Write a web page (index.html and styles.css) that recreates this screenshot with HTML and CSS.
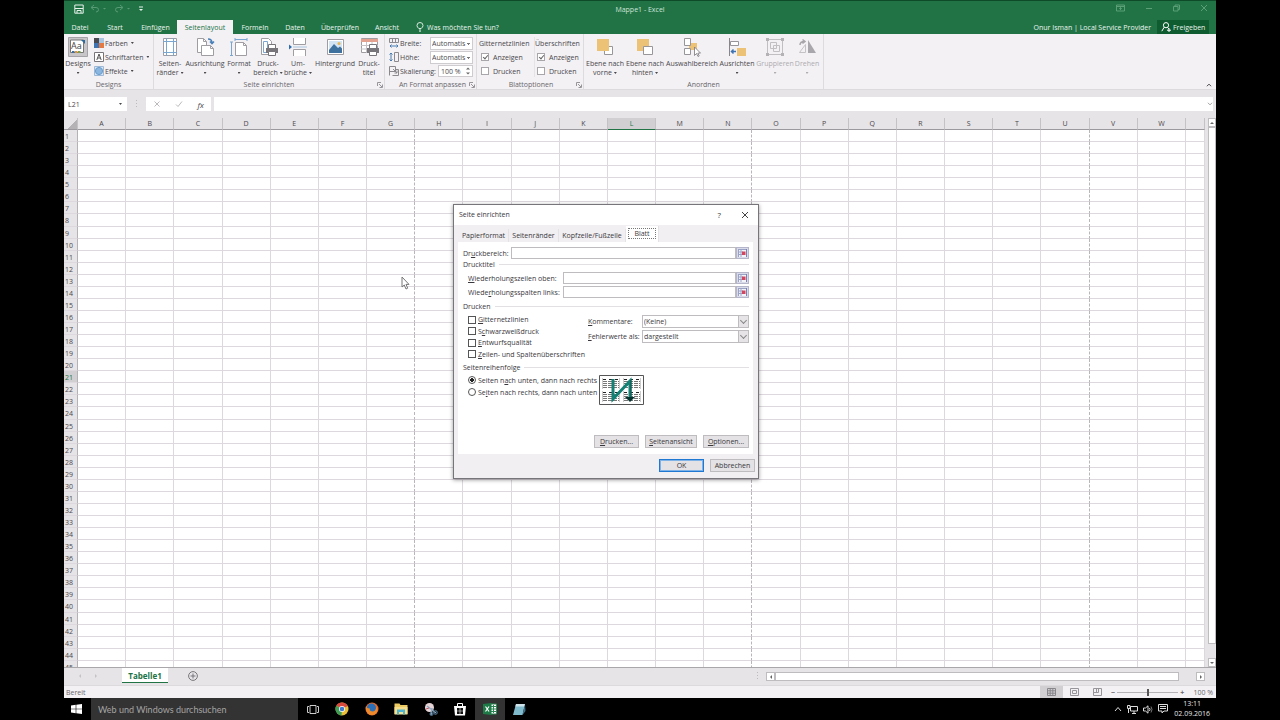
FILE: index.html
```html
<!DOCTYPE html>
<html lang="de">
<head>
<meta charset="utf-8">
<title>Mappe1 - Excel</title>
<link rel="stylesheet" href="styles.css">
</head>
<body>
<div class="desktop">
<div class="window">

  <header class="topbar">
    <div class="titlebar">
      <div class="quick">
        <button class="qbtn" aria-label="Speichern"><svg width="10" height="10" viewBox="0 0 10 10" fill="none" stroke="#e6f2ea"><path d="M.8 1h8.4v8.2H.8z"/><path d="M1 4.5h8M3 9V6.5h4V9"/></svg></button>
        <button class="qbtn dim" aria-label="Rückgängig"><svg width="18" height="9" viewBox="0 0 18 9" fill="none" stroke="#8fc4a4"><path d="M4 1 1 3.500l3 2.500M1.500 3.500H6q2.500 0 2.500 2.200Q8.500 8 6 8"/><path d="M13 4h3l-1.500 1.500z" fill="#8fc4a4" stroke="none"/></svg></button>
        <button class="qbtn dim" aria-label="Wiederholen"><svg width="18" height="9" viewBox="0 0 18 9" fill="none" stroke="#8fc4a4"><path d="m6 1 3 2.500L6 6M8.500 3.500H4Q1.500 3.500 1.500 5.700 1.500 8 4 8"/><path d="M13 4h3l-1.500 1.500z" fill="#8fc4a4" stroke="none"/></svg></button>
        <button class="qbtn" aria-label="Symbolleiste anpassen"><svg width="6" height="6" viewBox="0 0 6 6" fill="#e6f2ea"><path d="M1 .5h4v1H1zM1 3h4L3 5z"/></svg></button>
      </div>
      <div class="doc-title">Mappe1 - Excel</div>
      <div class="winbtns">
        <button aria-label="Menüband-Anzeige"><svg width="9" height="8" viewBox="0 0 9 8" fill="none" stroke="#5b9f77"><path d="M.5 1h8v6h-8zM.5 2.500h8M4.500 6V3.500M3.200 4.800l1.300-1.300 1.300 1.300"/></svg></button>
        <button aria-label="Minimieren"><svg width="9" height="8" viewBox="0 0 9 8" stroke="#5b9f77"><path d="M2 4.500h6"/></svg></button>
        <button aria-label="Verkleinern"><svg width="9" height="8" viewBox="0 0 9 8" fill="none" stroke="#5b9f77"><path d="M1.500 2.500h4.500v4.500H1.500zM3 2.500V1h4.500v4.500H6"/></svg></button>
        <button aria-label="Schließen"><svg width="9" height="8" viewBox="0 0 9 8" stroke="#5b9f77"><path d="m1 1 6 6M7 1 1 7"/></svg></button>
      </div>
    </div>
    <nav class="tabs">
      <button class="tab t-datei">Datei</button>
      <button class="tab t-start">Start</button>
      <button class="tab t-einf">Einfügen</button>
      <button class="tab t-seite active">Seitenlayout</button>
      <button class="tab t-form">Formeln</button>
      <button class="tab t-daten">Daten</button>
      <button class="tab t-pruef">Überprüfen</button>
      <button class="tab t-ansicht">Ansicht</button>
      <button class="tell"><svg width="8" height="10" viewBox="0 0 8 10" fill="none" stroke="#d8eadf"><path d="M2.800 6.500Q1 5 1 3.500a3 3 0 0 1 6 0Q7 5 5.200 6.500zM3 8h2M3.200 9.300h1.600"/></svg>Was möchten Sie tun?</button>
      <span class="user">Onur Isman | Local Service Provider</span>
      <button class="share"><svg width="10" height="10" viewBox="0 0 10 10" fill="none" stroke="#fff"><circle cx="5" cy="3.200" r="2.600"/><path d="M3.200 5.200.8 9.200M6.500 5.300 8 7M6 8.200h4M8 6.200v4"/></svg>Freigeben</button>
    </nav>
  </header>

  <section class="ribbon">
    <div class="group g-designs">
      <div class="tools">
        <button class="big w-designs"><svg width="20" height="20" viewBox="0 0 20 20"><path d="M.5.5h19v19H.5z" fill="#c9c6ca" stroke="#a5a2a8"/><path d="M2.500 3h13v12.500h-13z" fill="#fff" stroke="#777"/><path d="M13 3h4v4z" fill="#2e6a9e"/><text x="3" y="12" class="aa">Aa</text><path d="M4 14h2.500v2H4z" fill="#3b6ea5"/><path d="M7 14h2.500v2H7z" fill="#d9953b"/><path d="M10 14h2.500v2H10z" fill="#7d9b52"/></svg><span>Designs</span><i class="car"></i></button>
        <div class="stack">
          <button class="small"><svg width="10" height="10" viewBox="0 0 10 10"><path d="M0 0h5v5H0z" fill="#4a4a50"/><path d="M5 0h5v5H5z" fill="#a9c4de"/><path d="M0 5h5v5H0z" fill="#3f74b3"/><path d="M5 5h5v5H5z" fill="#e27a45"/></svg>Farben<i class="car"></i></button>
          <button class="small"><svg width="10" height="10" viewBox="0 0 10 10" fill="none"><path d="M.5.5h9v9h-9z" fill="#fff" stroke="#77757a"/><path d="m2.800 8 2.200-6 2.200 6M3.600 6h2.800" stroke="#555"/></svg>Schriftarten<i class="car"></i></button>
          <button class="small"><svg width="10" height="10" viewBox="0 0 10 10"><path d="M.5.5h9v9h-9z" fill="#dce8f5" stroke="#9db9d6"/><circle cx="5" cy="5" r="3.600" fill="#8ab6e0" stroke="#6b9bcb"/></svg>Effekte<i class="car"></i></button>
        </div>
      </div>
      <div class="glabel">Designs</div>
    </div>

    <div class="group g-seite">
      <div class="tools">
        <button class="big w-30"><svg width="20" height="20" viewBox="0 0 20 20" fill="none"><path d="M3.500 1.500h13v17h-13z" fill="#fff" stroke="#a09da2"/><path d="M6.500 1v18M13.500 1v18M3 4.500h14M3 15.500h14" stroke="#7ba6cf"/></svg><span>Seiten-<br>ränder<i class="car"></i></span></button>
        <button class="big w-40"><svg width="20" height="20" viewBox="0 0 20 20" fill="none"><path d="M2.500 1.500h6l3 3v11h-9z" fill="#fff" stroke="#a09da2"/><path d="M6.500 8.500h9l3 3v7h-12z" fill="#fff" stroke="#a09da2"/><path d="M8.500 1.500v3h3M15.500 8.500v3h3" stroke="#a09da2"/><path d="M13 2q4 0 4 4M15 4.500l2 2.200 2-2.200" stroke="#4a80b8" stroke-width="1.500"/></svg><span>Ausrichtung</span><i class="car"></i></button>
        <button class="big w-28"><svg width="20" height="20" viewBox="0 0 20 20" fill="none"><path d="M6.500 5.500h8l3 3v10h-11z" fill="#fff" stroke="#a09da2"/><path d="M14.500 5.500v3h3" stroke="#a09da2"/><path d="M6 2.500h12M6 1v3M18 1v3M2.500 5v14M1 5h3M1 18.500h3" stroke="#7ba6cf"/></svg><span>Format</span><i class="car"></i></button>
        <button class="big w-30"><svg width="20" height="20" viewBox="0 0 20 20" fill="none"><path d="M3.500 1.500h7l3 3v13h-10z" fill="#fff" stroke="#a09da2"/><path d="M5.500 4.500h4v11h-4z" stroke="#7ba6cf"/><path d="M10.500 7.500h7v4h-7z" fill="#fff" stroke="#77757a"/><path d="M8 11h12v5H8z" fill="#77757a"/><path d="M10.500 14.500h7v4h-7z" fill="#fff" stroke="#77757a"/></svg><span>Druck-<br>bereich<i class="car"></i></span></button>
        <button class="big w-30"><svg width="20" height="20" viewBox="0 0 20 20" fill="none"><path d="M5.500 1v6.500h12V1M5.500 19v-6.500h12V19" fill="#fff" stroke="#a09da2"/><path d="M5 10h14" stroke="#a9c4de"/><path d="m1 7.500 3 2.500-3 2.500z" fill="#2e6dad"/></svg><span>Um-<br>brüche<i class="car"></i></span></button>
        <button class="big w-44"><svg width="20" height="20" viewBox="0 0 20 20"><path d="M2.500 2.500h16v15h-16z" fill="#fff" stroke="#a09da2"/><path d="M4 4h13v12H4z" fill="#d3e5f5"/><path d="m4 13 5-6 4 4 2-1.500 2 2V16H4z" fill="#3f719f"/><circle cx="14" cy="6.500" r="1.500" fill="#e8b65a"/></svg><span>Hintergrund</span></button>
        <button class="big w-24"><svg width="20" height="20" viewBox="0 0 20 20" fill="none"><path d="M2.500 1.500h16v14h-16z" fill="#fff" stroke="#a09da2"/><path d="M2 2h17v3H2z" fill="#e3a18f"/><path d="M2 8.500h17M2 12h17M7.500 5v11M13 5v11" stroke="#c5c2c6"/><path d="M10.500 7.500h7v4h-7z" fill="#fff" stroke="#77757a"/><path d="M8 11h12v5H8z" fill="#77757a"/><path d="M10.500 14.500h7v4h-7z" fill="#fff" stroke="#77757a"/></svg><span>Druck-<br>titel</span></button>
      </div>
      <div class="glabel">Seite einrichten</div>
      <button class="launch" aria-label="Seite einrichten öffnen"><svg width="6" height="6" viewBox="0 0 6 6" fill="none" stroke="#98959a"><path d="M.5 4V.5H4M2 2l3 3M5.500 2.500v3h-3"/></svg></button>
    </div>

    <div class="group g-format">
      <div class="formrows">
        <div class="frow"><svg width="10" height="10" viewBox="0 0 10 10" fill="none"><path d="M.5.500h9v4h-9zM3.500.500v4M6.500.500v4" stroke="#8b898d"/><path d="M1 8h8M2.500 6.500 1 8l1.500 1.500M7.500 6.500 9 8 7.500 9.500" stroke="#4a7bb0"/></svg><label for="breite">Breite:</label><select id="breite" class="combo"><option>Automatis</option></select></div>
        <div class="frow"><svg width="10" height="10" viewBox="0 0 10 10" fill="none"><path d="M5.500.5h4v9h-4z" stroke="#8b898d"/><path d="M2 1v8M.5 2.500 2 1l1.500 1.500M.5 7.500 2 9l1.500-1.500" stroke="#4a7bb0"/></svg><label for="hoehe">Höhe:</label><select id="hoehe" class="combo"><option>Automatis</option></select></div>
        <div class="frow"><svg width="10" height="10" viewBox="0 0 10 10" fill="none"><path d="M.5 9.500v-9h6v5h-6M3.500 9.500h6v-6h-3M4 3l4 4M8 4.500V7H5.500" stroke="#8b898d"/></svg><label for="skal">Skalierung:</label><span class="spin"><input id="skal" value="100 %"><svg width="4" height="8" viewBox="0 0 4 8" fill="#666"><path d="M0 2.500 2 .5l2 2zM0 5.500h4l-2 2z"/></svg></span></div>
      </div>
      <div class="glabel">An Format anpassen</div>
      <button class="launch" aria-label="Skalierung öffnen"><svg width="6" height="6" viewBox="0 0 6 6" fill="none" stroke="#98959a"><path d="M.5 4V.5H4M2 2l3 3M5.500 2.500v3h-3"/></svg></button>
    </div>

    <div class="group g-blatt">
      <div class="optcols">
        <div class="optcol"><span class="ohead">Gitternetzlinien</span><label><input type="checkbox" checked>Anzeigen</label><label><input type="checkbox">Drucken</label></div>
        <div class="optcol second"><span class="ohead">Überschriften</span><label><input type="checkbox" checked>Anzeigen</label><label><input type="checkbox">Drucken</label></div>
      </div>
      <div class="glabel">Blattoptionen</div>
      <button class="launch" aria-label="Blattoptionen öffnen"><svg width="6" height="6" viewBox="0 0 6 6" fill="none" stroke="#98959a"><path d="M.5 4V.5H4M2 2l3 3M5.500 2.500v3h-3"/></svg></button>
    </div>

    <div class="group g-anordnen">
      <div class="tools">
        <button class="big w-42"><svg width="20" height="20" viewBox="0 0 20 20"><path d="M9.500 9.500h8v8h-8z" fill="#fff" stroke="#99969a"/><path d="M2 2h12v12H2z" fill="#ecc277"/></svg><span>Ebene nach<br>vorne<i class="car"></i></span></button>
        <button class="big w-38"><svg width="20" height="20" viewBox="0 0 20 20"><path d="M2 2h12v12H2z" fill="#ecc277"/><path d="M8.500 9.500h9v8h-9z" fill="#fff" stroke="#99969a"/></svg><span>Ebene nach<br>hinten<i class="car"></i></span></button>
        <button class="big w-56"><svg width="20" height="20" viewBox="0 0 20 20"><path d="M7 6h8v7H7z" fill="#ecc277"/><path d="M2.500 1.500h6v7h-6zM2.500 11.500h6v6h-6z" fill="#fff" stroke="#98959a"/><path d="M12.500 10v8.500l2-2 1.500 3 1.200-.6-1.400-2.800h2.700z" fill="#fff" stroke="#77757a" stroke-width=".8"/></svg><span>Auswahlbereich</span></button>
        <button class="big w-34"><svg width="20" height="20" viewBox="0 0 20 20" fill="none"><path d="M2.500 1v18" stroke="#88868a"/><path d="M3.500 4.500h8v4h-8z" fill="#fff" stroke="#98959a"/><path d="M10 11h9v8h-9z" fill="#ecc277"/><path d="M9 14.500H4.500M6.500 12.500l-2 2 2 2" stroke="#3f74b3" stroke-width="1.500"/></svg><span>Ausrichten</span><i class="car"></i></button>
        <button class="big off w-42"><svg width="20" height="20" viewBox="0 0 20 20" fill="none" stroke="#c2bfc3"><path d="M2.500 2.500h15v15h-15zM5.500 5.500h6v6h-6zM8.500 8.500h6v6h-6z"/><path d="M1 1h3v3H1zM16 1h3v3h-3zM1 16h3v3H1zM16 16h3v3h-3z" fill="#b5b2b6" stroke="none"/></svg><span>Gruppieren</span><i class="car"></i></button>
        <button class="big off w-22"><svg width="20" height="20" viewBox="0 0 20 20" fill="none"><path d="M2.500 15.500h6v-8z" stroke="#c5c2c6"/><path d="M11 3v13h8z" fill="#aaa7ac"/><path d="M3 8q0-3.500 4.500-3.500M5.500 2.500l2.500 2-2.500 2" stroke="#a9a6ab" stroke-width="1.500"/></svg><span>Drehen</span><i class="car"></i></button>
      </div>
      <div class="glabel">Anordnen</div>
    </div>
    <button class="collapse" aria-label="Menüband reduzieren"><svg width="6" height="4" viewBox="0 0 6 4" fill="none" stroke="#555"><path d="m.8 3.200 2.200-2 2.200 2"/></svg></button>
  </section>

  <section class="formula">
    <div class="namebox"><input value="L21" aria-label="Namenfeld"><i class="car"></i></div>
    <span class="grip"></span>
    <div class="fbtns">
      <button aria-label="Abbrechen"><svg width="8" height="8" viewBox="0 0 8 8" stroke="#bdbabd"><path d="m1.500 1.500 5 5M6.500 1.500l-5 5"/></svg></button>
      <button aria-label="Eingeben"><svg width="8" height="8" viewBox="0 0 8 8" fill="none" stroke="#bdbabd"><path d="m1 4.500 2 2L7 1.500"/></svg></button>
      <button class="fx" aria-label="Funktion einfügen">fx</button>
    </div>
    <div class="fx-input"><input aria-label="Bearbeitungsleiste"><svg width="6" height="4" viewBox="0 0 6 4" fill="none" stroke="#aaa"><path d="m.8.8 2.200 2 2.200-2"/></svg></div>
  </section>

  <main class="sheet">
    <div class="cells"><table id="grid"></table></div>
    <div class="vscroll"><button aria-label="Nach oben"><i class="up"></i></button><div class="vthumb"></div><button aria-label="Nach unten"><i class="down"></i></button></div>
  </main>

  <footer class="sheetbar">
    <div class="nav"><button aria-label="Vorheriges Blatt"><i class="left pale"></i></button><button aria-label="Nächstes Blatt"><i class="right pale"></i></button></div>
    <button class="sheettab">Tabelle1</button>
    <button class="addsheet" aria-label="Neues Blatt"><svg width="10" height="10" viewBox="0 0 10 10" fill="none" stroke="#77757a"><circle cx="5" cy="5" r="4.400"/><path d="M5 2.500v5M2.500 5h5"/></svg></button>
    <span class="grip push"></span>
    <div class="hscroll"><button aria-label="Nach links"><i class="left"></i></button><div class="htrack"><div class="hthumb"></div></div><button aria-label="Nach rechts"><i class="right"></i></button></div>
  </footer>

  <footer class="status">
    <span>Bereit</span>
    <div class="views">
      <button class="on" aria-label="Normal"><svg width="9" height="8" viewBox="0 0 9 8" fill="none" stroke="#88868a"><path d="M.5.5h8v7h-8zM.5 2.800h8M.5 5.200h8M3.200.5v7M5.800.5v7"/></svg></button>
      <button aria-label="Seitenlayout"><svg width="9" height="8" viewBox="0 0 9 8" fill="none" stroke="#98959a"><path d="M.5.500h8v7h-8zM2.500 2.500h4v3h-4z"/></svg></button>
      <button aria-label="Umbruchvorschau"><svg width="9" height="8" viewBox="0 0 9 8" fill="none" stroke="#98959a"><path d="M.5.500h8v7h-8zM3.500.5v4M5.500.5v4H.5"/></svg></button>
    </div>
    <div class="zoom"><button aria-label="Verkleinern">−</button><input type="range" min="0" max="100" value="50" aria-label="Zoom"><button aria-label="Vergrößern">+</button><span>100 %</span></div>
  </footer>

  <form class="dialog" onsubmit="return false">
    <div class="dtitle"><span>Seite einrichten</span><button type="button" class="help" aria-label="Hilfe">?</button><button type="button" aria-label="Schließen"><svg width="8" height="8" viewBox="0 0 8 8" stroke="#444"><path d="m1 1 6 6M7 1 1 7"/></svg></button></div>
    <div class="dtabs">
      <button type="button" class="dt-a">Papierformat</button>
      <button type="button" class="dt-b">Seitenränder</button>
      <button type="button" class="dt-c">Kopfzeile/Fußzeile</button>
      <button type="button" class="cur"><span>Blatt</span></button>
    </div>
    <div class="panel">
      <div class="line"><label class="l1" for="db">Dr<u>u</u>ckbereich:</label><input id="db"><button type="button" class="ref" aria-label="Bereich wählen"><svg width="9" height="8" viewBox="0 0 9 8"><path d="M0 0h9v8H0z" fill="#f3f3fa"/><path d="M0 .5h9M.5 0v8M0 3h5M0 5.500h4M3 0v8" stroke="#9aa2c6" fill="none"/><path d="M4 2.500h3.500V6H4z" fill="#d34660"/><path d="M8.500 0v8" stroke="#7c80ac"/></svg></button></div>
      <h2>Drucktitel</h2>
      <div class="line in first"><label class="l2" for="wz"><u>W</u>iederholungszeilen oben:</label><input id="wz"><button type="button" class="ref" aria-label="Zeilen wählen"><svg width="9" height="8" viewBox="0 0 9 8"><path d="M0 0h9v8H0z" fill="#f3f3fa"/><path d="M0 .5h9M.5 0v8M0 3h5M0 5.500h4M3 0v8" stroke="#9aa2c6" fill="none"/><path d="M4 2.500h3.500V6H4z" fill="#d34660"/><path d="M8.500 0v8" stroke="#7c80ac"/></svg></button></div>
      <div class="line in"><label class="l2" for="ws">Wiede<u>r</u>holungsspalten links:</label><input id="ws"><button type="button" class="ref" aria-label="Spalten wählen"><svg width="9" height="8" viewBox="0 0 9 8"><path d="M0 0h9v8H0z" fill="#f3f3fa"/><path d="M0 .5h9M.5 0v8M0 3h5M0 5.500h4M3 0v8" stroke="#9aa2c6" fill="none"/><path d="M4 2.500h3.500V6H4z" fill="#d34660"/><path d="M8.500 0v8" stroke="#7c80ac"/></svg></button></div>
      <h2 class="h-dr">Drucken</h2>
      <div class="print">
        <div class="checks">
          <label><input type="checkbox"><span><u>G</u>itternetzlinien</span></label>
          <label><input type="checkbox"><span>S<u>c</u>hwarzweißdruck</span></label>
          <label><input type="checkbox"><span><u>E</u>ntwurfsqualität</span></label>
          <label><input type="checkbox"><span><u>Z</u>eilen- und Spaltenüberschriften</span></label>
        </div>
        <div class="picks">
          <div class="pick"><label for="ko"><u>K</u>ommentare:</label><span class="drop"><select id="ko"><option>(Keine)</option></select><i class="chev"></i></span></div>
          <div class="pick"><label for="fe"><u>F</u>ehlerwerte als:</label><span class="drop"><select id="fe"><option>dargestellt</option></select><i class="chev"></i></span></div>
        </div>
      </div>
      <h2 class="h-sr">Seitenreihenfolge</h2>
      <div class="order">
        <div class="radios">
          <label><input type="radio" name="o" checked><span>Seiten n<u>a</u>ch unten, dann nach rechts</span></label>
          <label><input type="radio" name="o"><span>Se<u>i</u>ten nach rechts, dann nach unten</span></label>
        </div>
        <svg class="preview" width="45" height="30" viewBox="0 0 45 30" fill="none"><path d="M.5.5h44v29H.5z" fill="#fff" stroke="#555"/><g stroke="#777" stroke-dasharray="4 1"><path d="M4 6.500h16M4 8.500h16M4 10.500h16M4 12.500h16M4 19.500h16M4 21.500h16M4 23.500h16M4 25.500h16M25 6.500h16M25 8.500h16M25 10.500h16M25 12.500h16M25 19.500h16M25 21.500h16M25 23.500h16M25 25.500h16"/></g><path d="M4 4.500h16M25 4.500h16M4 17.500h16M25 17.500h16" stroke="#222" stroke-dasharray="3 3"/><path d="M3.500 3v11M3.500 16v11M20.500 3v11M20.500 16v11M24.500 3v11M24.500 16v11M41.500 3v11M41.500 16v11" stroke="#ccc"/><path d="M14 4v20L31 6v18" stroke="#158074" stroke-width="3"/><path d="M32 5v18" stroke="#0b4f49"/><path d="M26 22h10l-5 5z" fill="#07332f"/></svg>
      </div>
      <div class="pbtns"><button type="button" class="b-44"><u>D</u>rucken...</button><button type="button" class="b-52"><u>S</u>eitenansicht</button><button type="button" class="b-46"><u>O</u>ptionen...</button></div>
    </div>
    <div class="dfoot"><button class="b-44 ok">OK</button><button type="button" class="b-44">Abbrechen</button></div>
  </form>
  <svg class="cursor" width="9" height="14" viewBox="0 0 9 14"><path d="M1 1v10l2.300-2 1.700 4 1.700-.8L5 8.400h3z" fill="#fff" stroke="#777"/></svg>
</div>

<div class="taskbar">
  <button class="win" aria-label="Start"><svg width="11" height="10" viewBox="0 0 11 10" fill="#fff"><path d="M0 1.500 4.700.8v3.900H0zM5.300.700 11 0v4.700H5.300zM0 5.300h4.700v3.900L0 8.500zM5.300 5.300H11V10l-5.700-.7z"/></svg></button>
  <input class="search" placeholder="Web und Windows durchsuchen" aria-label="Suche">
  <div class="apps">
    <button aria-label="Taskansicht"><svg width="12" height="9" viewBox="0 0 12 9" fill="none" stroke="#ccc"><path d="M3 .5h6v8H3zM2 1.500H.5v6H2M10 1.500h1.500v6H10"/></svg></button>
    <button aria-label="Chrome"><svg width="14" height="14" viewBox="0 0 14 14"><circle cx="7" cy="7" r="6.500" fill="#e9bf3a"/><path d="M7 7 1.300 3.800A6.500 6.500 0 0 1 12.700 4z" fill="#d8483c"/><path d="M7 7 1.300 3.800A6.500 6.500 0 0 0 6.500 13.500z" fill="#3f9c55"/><circle cx="7" cy="7" r="3" fill="#fff"/><circle cx="7" cy="7" r="2.300" fill="#3f78cf"/></svg></button>
    <button aria-label="Firefox"><svg width="14" height="14" viewBox="0 0 14 14"><circle cx="7" cy="7" r="6.500" fill="#e46a28"/><circle cx="6.500" cy="6" r="4.500" fill="#2b6fb8"/><path d="M1 4q1 3 4 2.500Q4 9.500 8 9.500q3.500-.5 3-5 3 4 0 7-4 3-8 .2Q0 9 1 4z" fill="#ee8a2c"/></svg></button>
    <button aria-label="Explorer"><svg width="14" height="12" viewBox="0 0 14 12"><path d="M.5.5h5l1 1.500h7v9H.5z" fill="#eccb62"/><path d="M.5 4h13v7.500H.5z" fill="#f5de8d"/><path d="M3 11.500V6.500h8v5H9V9H5v2.500z" fill="#4fb4cf"/></svg></button>
    <button aria-label="Snipping Tool"><svg width="14" height="13" viewBox="0 0 14 13" fill="none"><circle cx="5.500" cy="4.500" r="4.500" fill="#e7d4d6"/><path d="m3 3 9 7M8 5 7 12" stroke="#8ea9c2" stroke-width="1.500"/><circle cx="11.500" cy="9.500" r="1.800" stroke="#58809f"/><circle cx="7.500" cy="11" r="1.500" stroke="#58809f"/><path d="m2 6 3-1" stroke="#c3525c"/></svg></button>
    <button aria-label="Store"><svg width="14" height="14" viewBox="0 0 14 14" fill="none"><path d="M1 4h12l-1 9.500H2z" fill="#fff"/><path d="M4.500 5V1.500h5V5" stroke="#fff"/><path d="M4 6h2.700v2.700H4zM7.300 6H10v2.700H7.300zM4 9.300h2.700V12H4zM7.300 9.300H10V12H7.300z" fill="#111"/></svg></button>
    <button class="running" aria-label="Excel"><svg width="14" height="12" viewBox="0 0 14 12" fill="none"><path d="M7 1h6.500v10H7z" fill="#fff" stroke="#2b8653"/><path d="M8 3.500h5M8 6h5M8 8.500h5M10.500 2v8" stroke="#2b8653"/><path d="M0 1 8.500 0v12L0 11z" fill="#1e7a47"/><path d="m2.500 3.500 3.500 5M6 3.500l-3.500 5" stroke="#fff" stroke-width="1.200"/></svg></button>
    <button aria-label="Editor"><svg width="14" height="13" viewBox="0 0 14 13"><path d="M4 1h9l-2.500 11H1z" fill="#7fb9cc"/><path d="M4 1h9l-.5 2.500H3.300z" fill="#cfe3ea"/><path d="m10.500 12 2.500-11 .5 7z" fill="#3f7085"/></svg></button>
  </div>
  <div class="tray">
    <svg width="8" height="6" viewBox="0 0 8 6" fill="none" stroke="#ddd"><path d="m1 5 3-3.500L7 5"/></svg>
    <svg width="11" height="9" viewBox="0 0 11 9" fill="none" stroke="#ddd"><path d="M3.500 1.500h7v4.500h-7zM5 8.500h4M7 6v2.500M.5.500h2.500v3H.5zM1.500 4v4"/></svg>
    <svg width="10" height="9" viewBox="0 0 10 9" fill="none" stroke="#ddd"><path d="M.5 3h2L5 .8v7.400L2.500 6h-2zM6.500 3q1 1.500 0 3"/><path d="M8 1.500q2 3 0 6" stroke="#777"/></svg>
    <svg width="10" height="10" viewBox="0 0 10 10" fill="none" stroke="#ddd"><path d="M.5.500h9v6.500H6L4 9V7H.5zM2 2.500h6M2 4.500h6"/></svg>
    <div class="clock">13:11<br>02.09.2016</div>
  </div>
</div>
</div>
<script src="sheet.js"></script>
</body>
</html>
```

FILE: sheet.js
```js
const letters = "ABCDEFGHIJKLMNOPQRSTUVW".split("");
const breaks = ["G", "N", "U"];
const grid = document.getElementById("grid");
const cls = (l) => (breaks.includes(l) ? ' class="brk"' : "");
let html = '<thead><tr><th class="corner"></th>';
for (const l of letters) html += `<th${l === "L" ? ' class="sel"' : ""}>${l}</th>`;
html += '<th class="rest"></th></tr></thead><tbody>';
for (let r = 1; r <= 45; r++) {
  html += `<tr><th${r === 21 ? ' class="sel"' : ""}>${r}</th>`;
  for (const l of letters) html += `<td${cls(l)}></td>`;
  html += "<td></td></tr>";
}
grid.innerHTML = html + "</tbody>";
```

FILE: styles.css
```css
* { box-sizing: border-box; }
body { margin: 0; background: #000; color: #4a484c; font: 7px/9px "Open Sans", "Noto Sans", sans-serif; }
button, input, select { font: inherit; color: inherit; margin: 0; padding: 0; border: 0; background: none; border-radius: 0; outline: 0; min-width: 0; }
button { white-space: nowrap; }
select { appearance: none; }
svg { display: block; flex: none; }
h2 { margin: 0; font: inherit; }

.desktop { height: 100vh; padding: 0 64px; display: flex; flex-direction: column; }
.window { flex: 1; min-height: 0; display: flex; flex-direction: column; background: #e6e4e7; }

/* title and tabs */
.topbar { background: #217346; color: #e9f4ed; border-top: 1px solid #0f4a28; }
.titlebar { height: 19px; display: grid; grid-template-columns: 1fr auto 1fr; align-items: center; }
.quick { display: flex; align-items: center; gap: 6px; padding: 0 0 4px 10px; }
.qbtn { display: flex; }
.dim { opacity: .5; }
.doc-title { color: #cfe3d7; padding-bottom: 2px; }
.winbtns { display: flex; justify-content: flex-end; gap: 19px; padding: 0 7px 5px 0; }
.tabs { display: flex; height: 14px; }
.tab { padding-top: 1px; text-align: center; }
.tab.active { background: #f3f1f4; color: #217346; }
.t-datei { width: 32px; }
.t-start { width: 38px; }
.t-einf { width: 43px; }
.t-seite { width: 56px; }
.t-form { width: 44px; }
.t-daten { width: 36px; }
.t-pruef { width: 54px; }
.t-ansicht { width: 40px; }
.tell { display: flex; align-items: center; gap: 3px; padding-left: 9px; }
.user { margin-left: auto; padding: 3px 6px 0 0; }
.share { display: flex; align-items: center; gap: 2px; width: 52px; margin-right: 7px; padding-left: 4px; background: #0e5c2f; }

/* ribbon */
.ribbon { display: flex; height: 56px; background: #f3f1f4; border-bottom: 1px solid #dcdadd; position: relative; }
.group { display: flex; flex-direction: column; border-right: 1px solid #dedbdf; padding-top: 3px; position: relative; }
.g-designs { width: 90px; }
.g-seite { width: 231px; }
.g-format { width: 92px; padding-left: 4px; }
.g-blatt { width: 107px; padding-left: 2px; }
.g-anordnen { width: 240px; }
.glabel { margin-top: auto; text-align: center; color: #69666b; }
.tools { display: flex; }
.g-seite .tools { padding-left: 1px; }
.big { display: flex; flex-direction: column; align-items: center; flex: none; line-height: 9px; gap: 2px; }
.big > .car { margin: 2px 0 0; }
.off { color: #aeabb0; }
.w-designs { width: 28px; }
.w-22 { width: 22px; } .w-24 { width: 24px; } .w-28 { width: 28px; } .w-30 { width: 30px; }
.w-34 { width: 34px; } .w-38 { width: 38px; } .w-40 { width: 40px; } .w-42 { width: 42px; }
.w-44 { width: 44px; } .w-56 { width: 56px; }
.aa { font: 9px "Open Sans", sans-serif; fill: #444; }
.car { display: inline-block; flex: none; width: 3px; height: 2px; background: currentColor; clip-path: polygon(0 0, 100% 0, 50% 100%); margin-left: 2px; vertical-align: 1px; }
.stack { display: flex; flex-direction: column; gap: 4px; padding: 1px 0 0 2px; }
.small { display: flex; align-items: center; gap: 1px; height: 10px; }
.formrows { display: flex; flex-direction: column; gap: 2px; }
.frow { display: flex; align-items: center; gap: 1px; height: 12px; padding-right: 3px; }
.combo { width: 43px; height: 13px; margin-left: auto; padding: 0 1px; border: 1px solid #cfccd0; background: linear-gradient(#777, #777) no-repeat right 2px top 5px / 3px 1px, linear-gradient(#777, #777) no-repeat right 3px top 6px / 1px 1px, #fff; }
.spin { display: flex; align-items: center; width: 35px; height: 12px; margin-left: auto; border: 1px solid #cfccd0; background: #fff; padding: 0 2px; }
.spin input { flex: 1; }
.optcols { display: flex; }
.optcol { display: flex; flex-direction: column; gap: 2px; width: 55px; white-space: nowrap; }
.optcol .ohead, .optcol label { display: flex; align-items: center; height: 12px; }
.optcol label { gap: 4px; padding-left: 2px; }
.second { width: auto; border-left: 1px solid #e6e3e7; }
input[type="checkbox"] { appearance: none; flex: none; width: 8px; height: 8px; border: 1px solid #a9a6ab; background: #fff; position: relative; }
.optcol input[type="checkbox"]:checked::after { content: ""; position: absolute; left: 2px; top: 0; width: 2px; height: 4px; border: solid #666; border-width: 0 1px 1px 0; transform: rotate(40deg); }
.launch { position: absolute; right: 1px; bottom: 1px; }
.collapse { position: absolute; right: 4px; bottom: 2px; }

/* formula bar */
.formula { display: flex; height: 28px; padding: 7px 3px 7px 1px; }
.namebox { display: flex; align-items: center; width: 62px; background: #fff; padding: 0 5px 0 3px; }
.namebox input { flex: 1; }
.grip { width: 1px; height: 8px; margin: 3px 9px; background: repeating-linear-gradient(#bbb 0 1px, transparent 1px 3px); }
.fbtns { display: flex; align-items: center; justify-content: space-around; width: 65px; background: #fff; }
.fx { font-size: 8px; font-style: italic; }
.fx-input { flex: 1; display: flex; align-items: center; margin-left: 3px; background: #fff; }
.fx-input input { flex: 1; align-self: stretch; }

/* cells */
.sheet { flex: 1; min-height: 0; display: flex; gap: 3px; border-bottom: 1px solid #aaa7ab; }
.cells { flex: 1; overflow: hidden; position: relative; background: #fff; }
table { width: 100%; height: calc(100% + 6px); table-layout: fixed; border-collapse: separate; border-spacing: 0; }
th, td { padding: 0; height: 12px; border: solid #ddd7de; border-width: 0 1px 1px 0; overflow: hidden; }
td.brk { border-right: 1px dashed #b9b6ba; }
th { font-weight: normal; font-size: 7px; line-height: 10px; background: #e6e4e7; }
thead th { border-color: #c5c2c6; border-bottom-color: #9c999e; }
tbody th { border-right-color: #b5b2b6; line-height: 9px; text-align: left; padding: 2px 0 0 1px; }
thead .sel { background: #d2cfd3; color: #217346; border-bottom-color: #217346; }
tbody .sel { background: #d2cfd3; color: #217346; }
.corner { width: 14px; background: linear-gradient(135deg, #e6e4e7 60%, #b5b2b6 60%); }
.rest { width: 19px; }
.vscroll { display: flex; flex-direction: column; width: 8px; }
.vscroll button { height: 9px; background: #fff; border: 1px solid #bfbcc0; display: grid; place-items: center; }
.vthumb { flex: 1; margin-bottom: 14px; background: #fff; border: 1px solid #bfbcc0; }
.up, .down { border: 2px solid transparent; }
.up { border-bottom-color: #666; border-top: 0; }
.down { border-top-color: #666; border-bottom: 0; }
.left, .right { border: 2px solid transparent; display: block; }
.left { border-right-color: #666; border-left: 0; }
.right { border-left-color: #666; border-right: 0; }
.left.pale { border-right-color: #c5c2c6; }
.right.pale { border-left-color: #c5c2c6; }

.sheetbar { display: flex; height: 17px; align-items: flex-start; }
.nav { display: flex; gap: 14px; width: 58px; padding: 6px 0 0 15px; }
.sheettab { width: 46px; height: 15px; background: #fff; color: #217346; font-size: 8px; font-weight: bold; border-bottom: 1px solid #217346; }
.addsheet { margin: 3px 0 0 20px; }
.push { margin: 4px 8px 0 auto; }
.hscroll { display: flex; width: 439px; height: 9px; margin: 4px 11px 0 0; }
.hscroll button { width: 9px; background: #fff; border: 1px solid #bfbcc0; display: grid; place-items: center; }
.htrack { flex: 1; display: flex; }
.hthumb { width: 96%; background: #fff; border: 1px solid #bfbcc0; }

.status { display: flex; align-items: center; height: 13px; padding: 0 3px 0 2px; background: #f3f1f4; color: #69666b; border-top: 1px solid #dcdadd; }
.views { display: flex; margin-left: auto; align-self: stretch; }
.views button { display: grid; place-items: center; width: 23px; }
.views .on { background: #d2cfd3; }
.zoom { display: flex; align-items: center; }
.zoom button { width: 8px; font-weight: bold; }
.zoom input { appearance: none; width: 61px; height: 9px; background: linear-gradient(#b5b2b6, #b5b2b6) center / 100% 1px no-repeat; }
.zoom input::-webkit-slider-thumb { appearance: none; width: 2px; height: 7px; background: #555; }
.zoom span { margin-left: 7px; white-space: nowrap; }

/* dialog */
.dialog { position: absolute; left: 453px; top: 204px; width: 306px; background: #f1eff2; color: #3a383c; border: 1px solid #77757a; box-shadow: 0 1px 4px rgba(0, 0, 0, .4); }
.dtitle { display: flex; align-items: center; height: 20px; background: #fff; padding: 0 9px 1px 5px; }
.dtitle span { margin-right: auto; }
.help { margin-right: 20px; font-size: 8px; }
.dtabs { display: flex; align-items: flex-end; height: 17px; padding-left: 5px; }
.dtabs button { height: 13px; border-right: 1px solid #e4e2e5; }
.dt-a { width: 50px; } .dt-b { width: 50px; } .dt-c { width: 67px; }
.dtabs .cur { height: 16px; width: 33px; background: #fff; padding: 0 2px 2px; }
.cur span { display: block; border: 1px dotted #777; }
.panel { display: flex; flex-direction: column; height: 212px; margin: 0 5px 0 4px; padding: 5px 4px 6px 5px; background: #fff; }
.line { display: flex; align-items: center; height: 12px; white-space: nowrap; }
.line input { flex: 1; height: 12px; border: 1px solid #bfbcc0; }
.line.in { margin-top: 2px; padding-left: 5px; }
.l1 { width: 48px; }
.l2 { width: 95px; }
.ref { display: grid; place-items: center; width: 13px; height: 12px; border: 1px solid #b5b6ca; background: #d9daea; }
.panel h2 { display: flex; align-items: center; height: 11px; margin-top: 0; gap: 4px; }
.panel h2::after { content: ""; flex: 1; height: 1px; background: #e2e0e3; }
.panel .h-dr { margin-top: 3px; }
.panel .h-sr { margin-top: 2px; }
.print { display: flex; justify-content: space-between; margin-top: 2px; padding-left: 5px; }
.checks { display: grid; grid-template-rows: repeat(4, 1fr); height: 46px; }
.checks label, .radios label { display: flex; align-items: center; gap: 2px; white-space: nowrap; }
.checks input[type="checkbox"] { border-color: #555; }
.picks { display: flex; flex-direction: column; gap: 3px; padding-top: 1px; width: 161px; margin-left: -40px; }
.pick { display: flex; align-items: center; justify-content: space-between; height: 12px; }
.drop { display: flex; width: 107px; height: 13px; border: 1px solid #bfbcc0; background: #fff; }
.drop select { flex: 1; padding-left: 1px; }
.chev { display: grid; place-items: center; width: 10px; background: #e6e4e7; border-left: 1px solid #bfbcc0; }
.chev::after { content: ""; width: 4px; height: 4px; margin-top: -2px; border: solid #888; border-width: 0 1px 1px 0; transform: rotate(45deg); }
.order { display: flex; gap: 6px; margin-top: 1px; padding-left: 5px; }
.radios label { height: 12px; }
.radios { width: 125px; }
input[type="radio"] { appearance: none; flex: none; width: 8px; height: 8px; border: 1px solid #555; border-radius: 50%; background: #fff; }
input[type="radio"]:checked { background: radial-gradient(#222 0 2px, #fff 2px); }
.preview { margin-top: 1px; }
.pbtns, .dfoot { display: flex; justify-content: flex-end; gap: 6px; }
.pbtns { margin-top: auto; }
.pbtns button, .dfoot button { height: 13px; border: 1px solid #bfbcc0; background: #e4e2e5; }
.dfoot { height: 24px; padding: 5px 3px 0 0; }
.b-44 { width: 45px; } .b-46 { width: 46px; } .b-52 { width: 52px; }
.dfoot .ok { border: 1px solid #1f78d1; outline: 1px solid #7fb2e6; outline-offset: -2px; }
.cursor { position: absolute; left: 401px; top: 276px; }

/* taskbar */
.taskbar { display: flex; height: 22px; align-items: stretch; background: #000; color: #e6e6e6; }
.win { width: 27px; padding-left: 7px; }
.search { width: 207px; padding-left: 7px; background: #333; font: 9px Lato, "Open Sans", sans-serif; }
.search::placeholder { color: #a5a5a5; opacity: 1; }
.apps { display: grid; grid-template-columns: repeat(8, 1fr); width: 236px; }
.apps button { display: grid; place-items: center; }
.running { background: #333; }
.tray { display: flex; align-items: center; gap: 5px; margin-left: auto; padding-right: 6px; }
.clock { margin-left: 1px; text-align: center; line-height: 10px; }
```
